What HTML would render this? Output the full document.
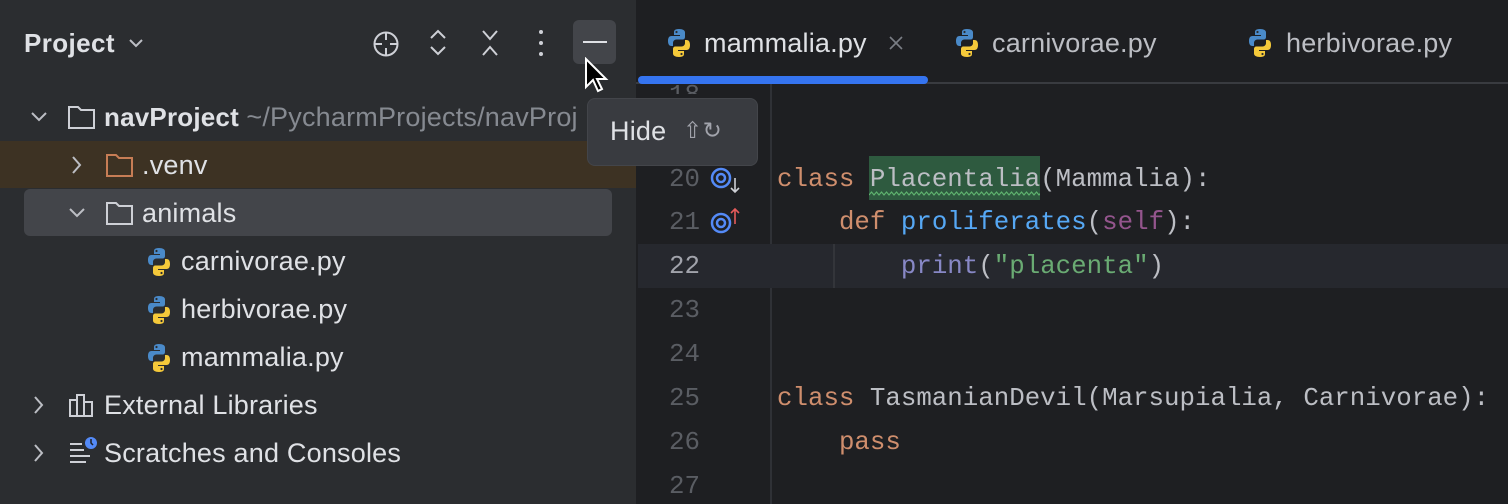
<!DOCTYPE html>
<html><head><meta charset="utf-8"><style>
*{margin:0;padding:0;box-sizing:border-box}
body{width:1508px;height:504px;overflow:hidden;background:#1e1f22;font-family:"Liberation Sans",sans-serif;position:relative}
.left{position:absolute;left:0;top:0;width:636px;height:504px;background:#2b2d30}
.a{position:absolute;white-space:pre}
.t{font-size:27px;color:#dfe1e5;line-height:30px;letter-spacing:0.2px}
.mono{font-family:"Liberation Mono",monospace;font-size:25.8px;line-height:30px}
.ln{color:#5a5d63;width:60px;text-align:right;left:640px}
.k{color:#cf8e6d}.f{color:#56a8f5}.s{color:#6aab73}.sf{color:#94558d}.p{color:#8888c6}.d{color:#bcbec4}
</style></head><body>
<svg width="0" height="0" style="position:absolute"><defs>
<g id="py"><path d="M12 1C7 1 7 3 7 4.5V7h6v1H4.5C2 8 1 10 1 13s1 5 3.5 5H6v-3c0-2 1.5-3.5 3.5-3.5h6c1.5 0 2.5-1 2.5-2.5V4.5C18 2.5 16 1 12 1z" fill="#4a8ac9"/><path d="M12 29c5 0 5-2 5-3.5V23h-6v-1h8.5c2.5 0 3.5-2 3.5-5s-1-5-3.5-5H18v3c0 2-1.5 3.5-3.5 3.5h-6C7 18.5 6 19.5 6 21v4.5C6 27.5 8 29 12 29z" fill="#f5c93a"/><circle cx="9.5" cy="4" r="1.1" fill="#2b2d30"/><circle cx="14.5" cy="26" r="1.1" fill="#2b2d30"/></g>
</defs></svg>
<div class="left"></div>
<div class="a" style="left:0;top:141px;width:636px;height:47px;background:#3d3223"></div>
<div class="a" style="left:24px;top:189px;width:588px;height:47px;background:#43454a;border-radius:6px"></div>

<div class="a t" style="left:24px;top:28px;font-weight:bold;font-size:26px;letter-spacing:0.4px">Project</div>
<svg class="a" style="left:128px;top:37px" width="16" height="12"><path d="M2 3l6 6 6-6" stroke="#bcbec4" stroke-width="2" fill="none"/></svg>
<svg class="a" style="left:371px;top:29px" width="30" height="30" fill="none" stroke="#ced0d6" stroke-width="2"><circle cx="15" cy="15" r="11.5"/><path d="M15 3v8M15 19v8M3 15h8M19 15h8"/></svg>
<svg class="a" style="left:427px;top:28px" width="22" height="30" fill="none" stroke="#ced0d6" stroke-width="2"><path d="M4 10l7-7 7 7M4 19l7 7 7-7"/></svg>
<svg class="a" style="left:479px;top:28px" width="22" height="30" fill="none" stroke="#ced0d6" stroke-width="2"><path d="M4 3l7 8 7-8M4 27l7-8 7 8"/></svg>
<svg class="a" style="left:536px;top:28px" width="10" height="30" fill="#ced0d6"><circle cx="5" cy="4" r="2"/><circle cx="5" cy="15" r="2"/><circle cx="5" cy="26" r="2"/></svg>
<div class="a" style="left:573px;top:20px;width:43px;height:44px;background:#43454a;border-radius:6px"></div>
<div class="a" style="left:583px;top:41px;width:24px;height:2px;background:#dfe1e5"></div>
<svg class="a" style="left:584px;top:57px" width="28" height="40"><path d="M2 2v28l7-7 5 11 4-2-5-10h9z" fill="#000" stroke="#fff" stroke-width="2"/></svg>

<svg class="a" style="left:30px;top:110px" width="18" height="14"><path d="M2 3l7 7 7-7" stroke="#bcbec4" stroke-width="2" fill="none"/></svg>
<svg class="a" style="left:67px;top:103px" width="30" height="28" fill="none" stroke="#ced0d6" stroke-width="2"><path d="M2 4h9l3 3h13v18H2z"/></svg>
<div class="a t" style="left:104px;top:102px;font-weight:bold;font-size:26px">navProject <span style="font-weight:normal;color:#868a91;font-size:27px">~/PycharmProjects/navProj</span></div>

<svg class="a" style="left:70px;top:155px" width="14" height="20"><path d="M3 2l7 8-7 8" stroke="#bcbec4" stroke-width="2" fill="none"/></svg>
<svg class="a" style="left:105px;top:151px" width="30" height="28" fill="none" stroke="#c77d55" stroke-width="2"><path d="M2 4h9l3 3h13v18H2z"/></svg>
<div class="a t" style="left:142px;top:150px">.venv</div>

<svg class="a" style="left:68px;top:206px" width="18" height="14"><path d="M2 3l7 7 7-7" stroke="#bcbec4" stroke-width="2" fill="none"/></svg>
<svg class="a" style="left:105px;top:199px" width="30" height="28" fill="none" stroke="#ced0d6" stroke-width="2"><path d="M2 4h9l3 3h13v18H2z"/></svg>
<div class="a t" style="left:142px;top:198px">animals</div>

<svg class="a" style="left:144px;top:247px" width="30" height="30" viewBox="0 0 24 30"><use href="#py"/></svg>
<div class="a t" style="left:181px;top:246px">carnivorae.py</div>
<svg class="a" style="left:144px;top:295px" width="30" height="30" viewBox="0 0 24 30"><use href="#py"/></svg>
<div class="a t" style="left:181px;top:294px">herbivorae.py</div>
<svg class="a" style="left:144px;top:343px" width="30" height="30" viewBox="0 0 24 30"><use href="#py"/></svg>
<div class="a t" style="left:181px;top:342px">mammalia.py</div>

<svg class="a" style="left:32px;top:395px" width="14" height="20"><path d="M3 2l7 8-7 8" stroke="#bcbec4" stroke-width="2" fill="none"/></svg>
<svg class="a" style="left:68px;top:392px" width="30" height="26" fill="none" stroke="#ced0d6" stroke-width="2"><path d="M2 8h7v16H2zM9 3h7v21H9zM16 10h8v14h-8z"/></svg>
<div class="a t" style="left:104px;top:390px">External Libraries</div>
<svg class="a" style="left:32px;top:443px" width="14" height="20"><path d="M3 2l7 8-7 8" stroke="#bcbec4" stroke-width="2" fill="none"/></svg>
<svg class="a" style="left:68px;top:436px" width="32" height="30"><path d="M2 8h12M2 14h14M2 20h20M2 26h16" stroke="#ced0d6" stroke-width="2"/><circle cx="23" cy="7" r="6" fill="#548af7"/><path d="M23 3v4l2 2" stroke="#1e1f22" stroke-width="1.5" fill="none"/></svg>
<div class="a t" style="left:104px;top:438px">Scratches and Consoles</div>

<svg class="a" style="left:664px;top:28px" width="30" height="30" viewBox="0 0 24 30"><use href="#py"/></svg>
<div class="a t" style="left:704px;top:28px;color:#dfe1e5">mammalia.py</div>
<svg class="a" style="left:888px;top:35px" width="16" height="16"><path d="M2 2l12 12M14 2L2 14" stroke="#7a7e85" stroke-width="1.6"/></svg>
<svg class="a" style="left:952px;top:28px" width="30" height="30" viewBox="0 0 24 30"><use href="#py"/></svg>
<div class="a t" style="left:992px;top:28px;color:#bcbec4">carnivorae.py</div>
<svg class="a" style="left:1245px;top:28px" width="30" height="30" viewBox="0 0 24 30"><use href="#py"/></svg>
<div class="a t" style="left:1286px;top:28px;color:#bcbec4">herbivorae.py</div>
<div class="a" style="left:636px;top:82px;width:872px;height:2px;background:#393b40"></div>
<div class="a" style="left:638px;top:76px;width:290px;height:8px;background:#3574f0;border-radius:4px"></div>

<div class="a" style="left:770px;top:84px;width:2px;height:420px;background:#2f3136"></div>
<div class="a" style="left:638px;top:244px;width:870px;height:44px;background:#26282e"></div>
<div class="a" style="left:833px;top:244px;width:2px;height:44px;background:#33353a"></div>
<div class="a mono ln" style="top:76px;height:18px;overflow:hidden;line-height:40px">18</div>
<div class="a mono ln" style="top:165px">20</div>
<div class="a mono ln" style="top:208px">21</div>
<div class="a mono ln" style="top:252px;color:#a1a3ab">22</div>
<div class="a mono ln" style="top:296px">23</div>
<div class="a mono ln" style="top:340px">24</div>
<div class="a mono ln" style="top:384px">25</div>
<div class="a mono ln" style="top:428px">26</div>
<div class="a mono ln" style="top:472px">27</div>
<svg class="a" style="left:710px;top:166px" width="32" height="30" fill="none"><circle cx="11" cy="12" r="9" stroke="#548af7" stroke-width="2.5"/><circle cx="11" cy="12" r="4" stroke="#548af7" stroke-width="2.5"/><path d="M25 12v14M21 22l4 4 4-4" stroke="#ced0d6" stroke-width="1.6"/></svg>
<svg class="a" style="left:710px;top:206px" width="32" height="30" fill="none"><circle cx="11" cy="17" r="9" stroke="#548af7" stroke-width="2.5"/><circle cx="11" cy="17" r="4" stroke="#548af7" stroke-width="2.5"/><path d="M25 18V3M21 7l4-4 4 4" stroke="#e55b5b" stroke-width="1.6"/></svg>

<div class="a" style="left:869px;top:156px;width:103px;height:44px;background:#2e5a3f;width:171px"></div>
<svg class="a" style="left:869px;top:191px" width="171" height="6"><path d="M0 4l2.5-3 2.5 3 2.5-3 2.5 3 2.5-3 2.5 3 2.5-3 2.5 3 2.5-3 2.5 3 2.5-3 2.5 3 2.5-3 2.5 3 2.5-3 2.5 3 2.5-3 2.5 3 2.5-3 2.5 3 2.5-3 2.5 3 2.5-3 2.5 3 2.5-3 2.5 3 2.5-3 2.5 3 2.5-3 2.5 3 2.5-3 2.5 3 2.5-3 2.5 3 2.5-3 2.5 3 2.5-3 2.5 3 2.5-3 2.5 3 2.5-3 2.5 3 2.5-3 2.5 3 2.5-3 2.5 3 2.5-3 2.5 3 2.5-3 2.5 3 2.5-3 2.5 3 2.5-3 2.5 3 2.5-3 2.5 3 2.5-3 2.5 3 2.5-3 2.5 3 2.5-3 2.5 3 2.5-3 2.5 3 2.5-3 2.5 3 2.5-3 2.5 3 2.5-3 2.5 3 2.5-3 2.5 3 2.5-3 2.5 3 2.5-3 2.5 3" stroke="#5fb36f" stroke-width="1.2" fill="none"/></svg>
<div class="a mono d" style="left:777px;top:165px"><span class="k">class</span> Placentalia(Mammalia):</div>
<div class="a mono d" style="left:777px;top:208px">    <span class="k">def</span> <span class="f">proliferates</span>(<span class="sf">self</span>):</div>
<div class="a mono d" style="left:777px;top:252px">        <span class="p">print</span>(<span class="s">"placenta"</span>)</div>
<div class="a mono d" style="left:777px;top:384px"><span class="k">class</span> TasmanianDevil(Marsupialia, Carnivorae):</div>
<div class="a mono d" style="left:777px;top:428px">    <span class="k">pass</span></div>

<div class="a" style="left:587px;top:98px;width:171px;height:68px;background:#393b40;border-radius:8px;border:1px solid #43454a"></div>
<div class="a t" style="left:610px;top:116px;color:#dfe1e5">Hide</div>
<div class="a t" style="left:683px;top:116px;color:#a1a3ab;font-family:'DejaVu Sans',sans-serif;font-size:23px">⇧↻</div>
</body></html>
